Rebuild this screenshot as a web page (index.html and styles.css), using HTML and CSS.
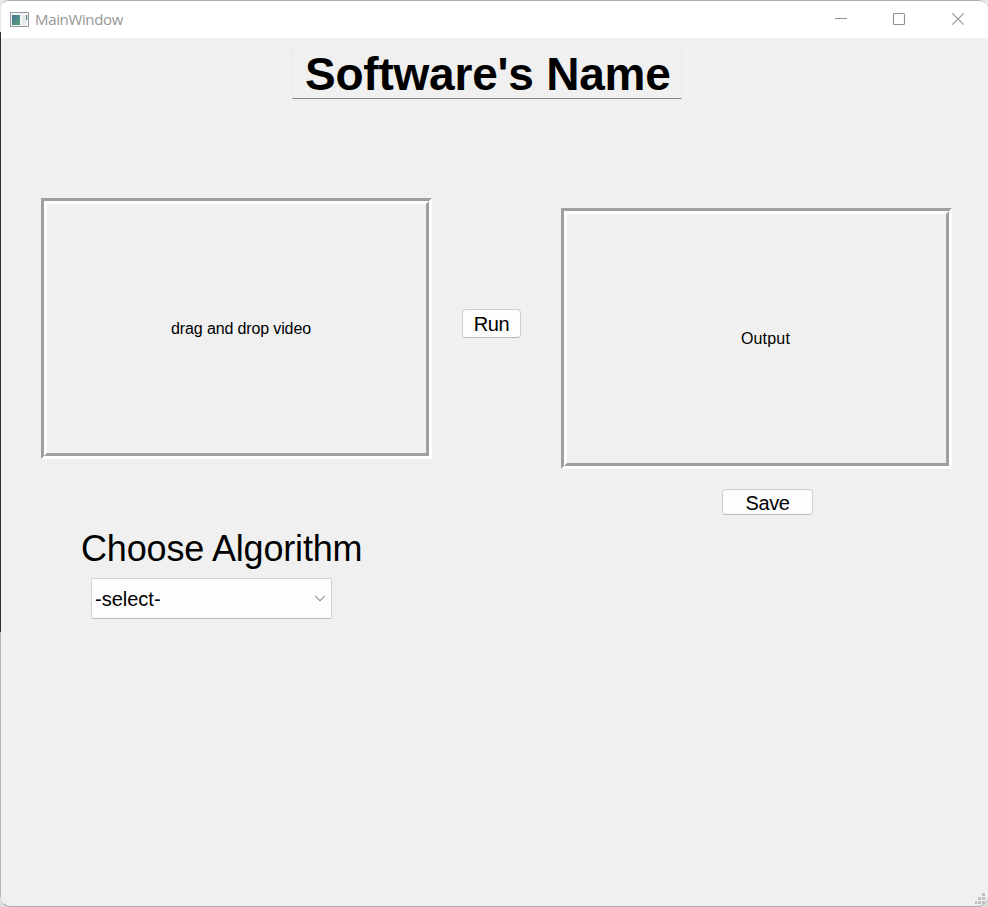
FILE: index.html
```html
<!DOCTYPE html>
<html lang="en">
<head>
<meta charset="utf-8">
<title>MainWindow</title>
<link rel="stylesheet" href="styles.css">
</head>
<body>
<div class="window">
  <header class="titlebar">
    <svg class="app-icon" width="20" height="16" viewBox="0 0 20 16">
      <defs><linearGradient id="pane" x1="0" y1="0" x2="1" y2="1"><stop offset="0" stop-color="#4a7095"/><stop offset="1" stop-color="#55a57c"/></linearGradient></defs>
      <rect x=".5" y=".5" width="18" height="14" fill="#f4f4f4" stroke="#92989d"/>
      <rect x="2" y="3" width="8" height="10" fill="url(#pane)"/>
      <rect x="12" y="3" width="4" height="10" fill="#e6e9eb"/>
      <rect x="16" y="3" width="1.3" height="5" fill="url(#pane)"/>
    </svg>
    <span class="caption">MainWindow</span>
    <svg class="controls" width="132" height="14" viewBox="0 0 132 14" fill="none" stroke="#929292">
      <path d="M0 6.5h12"/>
      <rect x="58.5" y="1.5" width="11" height="11" rx="1" stroke-width="1.2"/>
      <path d="M117.3 1.3l11.4 11.4M128.7 1.3l-11.4 11.4" stroke-width="1.1"/>
    </svg>
  </header>
  <main class="content">
    <h1 class="heading"><span>Software's Name</span></h1>
    <div class="workspace">
      <section class="source">
        <div class="panel"><div class="panel-inner"><span class="drop-text">drag and drop video</span></div></div>
        <label class="algorithm-label" for="algorithm">Choose Algorithm</label>
        <div class="select" id="algorithm"><span>-select-</span>
          <svg width="12" height="7" viewBox="0 0 12 7" fill="none" stroke="#606060"><path d="M1.2 1l4.8 4.7L10.8 1"/></svg>
        </div>
      </section>
      <button class="button run">Run</button>
      <section class="result">
        <div class="panel"><div class="panel-inner"><span class="output-text">Output</span></div></div>
        <button class="button save">Save</button>
      </section>
    </div>
  </main>
  <svg class="grip" width="11" height="11" viewBox="0 0 11 11" fill="#bfbfbf">
    <path d="M7 0h3v3H7zM3 4h3v3H3zM7 4h3v3H7zM0 8h2v3H0zM3 8h3v3H3zM7 8h3v3H7z"/>
  </svg>
</div>
</body>
</html>
```
FILE: styles.css
```css
* { box-sizing: border-box; }
html { background: linear-gradient(to bottom, #e9e9e9 0 32px, #303030 32px 632px, #b4b4b4 632px 897px, #dedede 897px); }
body { margin: 0; height: 907px; overflow: hidden; color: #000; font-family: "Liberation Sans", Arial, sans-serif; }
.window { position: relative; height: 907px; background: #f0f0f0; border: 1px solid #adadad; border-left-color: transparent; border-right: 0; border-radius: 9px 9px 10px 10px; overflow: hidden; background-clip: padding-box; }
.titlebar { display: flex; align-items: center; height: 37px; padding: 0 21px 2px 9px; background: #fff; }
.app-icon { flex: none; position: relative; top: 1px; }
.caption { margin-left: 5px; color: #969696; font: 15px/20px "Open Sans", sans-serif; letter-spacing: -0.35px; }
.controls { margin-left: auto; }
.content { display: flex; flex-direction: column; padding: 10px 36px 0 40px; }
.heading { width: 390px; height: 51px; margin: 0 0 0 251px; padding-left: 12px; border: 1px solid #ebebeb; border-bottom-color: #858585; font-size: 46px; line-height: 51px; letter-spacing: -0.22px; white-space: nowrap; }
.workspace { display: grid; grid-template-columns: 391px 59px 391px; column-gap: 30px; align-items: start; padding-top: 99px; }
.panel { width: 391px; height: 261px; border: 3px solid; border-color: #a0a0a0 #fff #fff #a0a0a0; }
.panel-inner { display: flex; align-items: center; justify-content: center; height: 100%; padding-left: 9px; border: 3px solid; border-color: #fff #a0a0a0 #a0a0a0 #fff; font-size: 16px; }
.drop-text { letter-spacing: -0.13px; }
.output-text { padding-left: 9px; letter-spacing: 0.2px; }
.result { margin: 10px 0 0 10px; }
.button { display: flex; align-items: center; justify-content: center; padding: 0; background: #fdfdfd; border: 1px solid #d0d0d0; border-bottom-color: #bababa; border-radius: 4px; color: #000; font: 20px/24px "Liberation Sans", Arial, sans-serif; letter-spacing: -0.4px; }
.run { width: 59px; height: 29px; margin-top: 111px; }
.save { width: 91px; height: 26px; margin: 20px 0 0 161px; padding-top: 2px; }
.algorithm-label { display: block; margin: 69px 0 0 40px; padding-top: 1px; height: 40px; font-size: 36px; line-height: 40px; letter-spacing: -0.17px; white-space: nowrap; }
.select { display: flex; align-items: center; justify-content: space-between; width: 241px; height: 41px; margin: 10px 0 0 50px; padding: 0 5px 0 3px; background: #fdfdfd; border: 1px solid #d0d0d0; border-bottom-color: #bababa; border-radius: 2px; font-size: 20px; }
.select span { padding-top: 2px; }
.grip { position: absolute; right: 2px; bottom: 2px; }
```
